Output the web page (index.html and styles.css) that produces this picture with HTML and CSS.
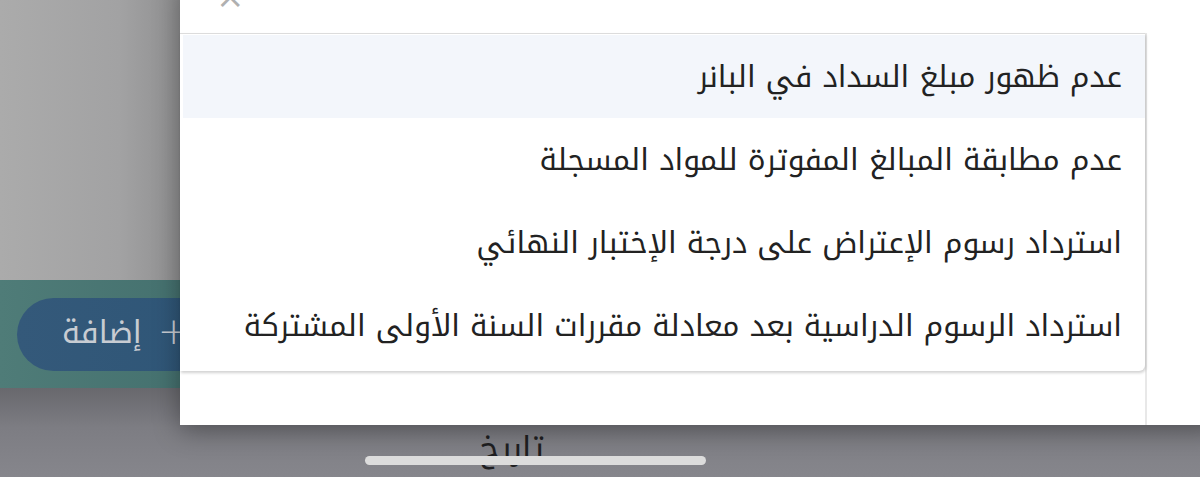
FILE: index.html
```html
<!DOCTYPE html>
<html lang="ar">
<head>
    <meta charset="UTF-8">
    <meta name="viewport" content="width=device-width, initial-scale=1.0">
    <title>اختيار نوع الطلب</title>
    <link rel="stylesheet" href="styles.css">
</head>
<body>
    <div class="page">
        <div class="page-top"></div>
        <div class="toolbar">
            <button class="add-button"><span class="label" dir="rtl">إضافة</span><span class="plus">+</span></button>
        </div>
        <div class="page-rest">
            <span class="date-label" dir="rtl">تاريخ</span>
        </div>
    </div>

    <div class="modal">
        <div class="modal-header">
            <span class="close">&times;</span>
        </div>
        <div class="modal-body">
            <ul class="menu" dir="rtl">
                <li class="menu-item active">عدم ظهور مبلغ السداد في البانر</li>
                <li class="menu-item">عدم مطابقة المبالغ المفوترة للمواد المسجلة</li>
                <li class="menu-item">استرداد رسوم الإعتراض على درجة الإختبار النهائي</li>
                <li class="menu-item">استرداد الرسوم الدراسية بعد معادلة مقررات السنة الأولى المشتركة</li>
            </ul>
        </div>
    </div>

    <div class="home-bar"></div>
</body>
</html>
```

FILE: styles.css
```css
body {
    margin: 0;
    width: 1200px;
    height: 477px;
    overflow: hidden;
    position: relative;
    font-family: "Noto Kufi Arabic", "DejaVu Sans", "Noto Sans", sans-serif;
    background-color: #8a8a8f;
}
.page {
    display: flex;
    flex-direction: column;
    height: 477px;
}
.page-top {
    height: 280px;
    flex-shrink: 0;
    background: linear-gradient(to right, #ababab 0, #a2a2a3 120px, #8f8f90 180px);
}
.toolbar {
    height: 108px;
    flex-shrink: 0;
    display: flex;
    align-items: center;
    padding-left: 17px;
    background: linear-gradient(to right, #4f7c78 0, #45716f 180px);
}
.add-button {
    height: 73px;
    width: 260px;
    border: none;
    border-radius: 37px;
    background: linear-gradient(to right, #34597a 0, #2f5677 180px);
    color: #c8ccd2;
    font-family: inherit;
    font-size: 31px;
    padding: 0 0 4px 45px;
    display: flex;
    align-items: center;
    justify-content: flex-start;
    gap: 16px;
}
.add-button .plus {
    font-family: "DejaVu Sans", sans-serif;
    font-size: 38px;
    font-weight: 300;
    padding-bottom: 2px;
}
.page-rest {
    flex: 1;
    padding: 30px 0 0 480px;
    background: linear-gradient(to bottom, #68686d 0, #7d7d83 40px, #86868c 89px);
}
.date-label {
    font-size: 32px;
    color: #1f1f22;
}
.modal {
    position: absolute;
    left: 180px;
    top: -20px;
    width: 1040px;
    height: 445px;
    background-color: white;
    box-shadow: 0 6px 24px rgba(0, 0, 0, 0.35);
    display: flex;
    flex-direction: column;
}
.modal-header {
    height: 53px;
    position: relative;
}
.close {
    position: absolute;
    left: 36px;
    top: -1px;
    font-family: "DejaVu Sans", sans-serif;
    font-size: 34px;
    color: #b0b0b0;
    line-height: 1;
}
.modal-body {
    flex: 1;
    width: 965px;
    border-right: 2px solid #e8e8e8;
}
.menu {
    list-style: none;
    margin: 0;
    padding: 1px 0 4px 0;
    width: 965px;
    border-top: 1px solid #dcdcdc;
    border-radius: 0 0 6px 0;
    box-shadow: 1px 2px 3px rgba(0, 0, 0, 0.18);
}
.menu-item {
    height: 83px;
    display: flex;
    align-items: center;
    padding: 0 23px 0 0;
    margin-left: 3px;
    font-size: 30px;
    color: #222;
}
.menu-item.active {
    background-color: #f3f6fb;
}
.home-bar {
    position: absolute;
    left: 365px;
    top: 456px;
    width: 341px;
    height: 9px;
    border-radius: 5px;
    background-color: #dcdcdc;
}
```
